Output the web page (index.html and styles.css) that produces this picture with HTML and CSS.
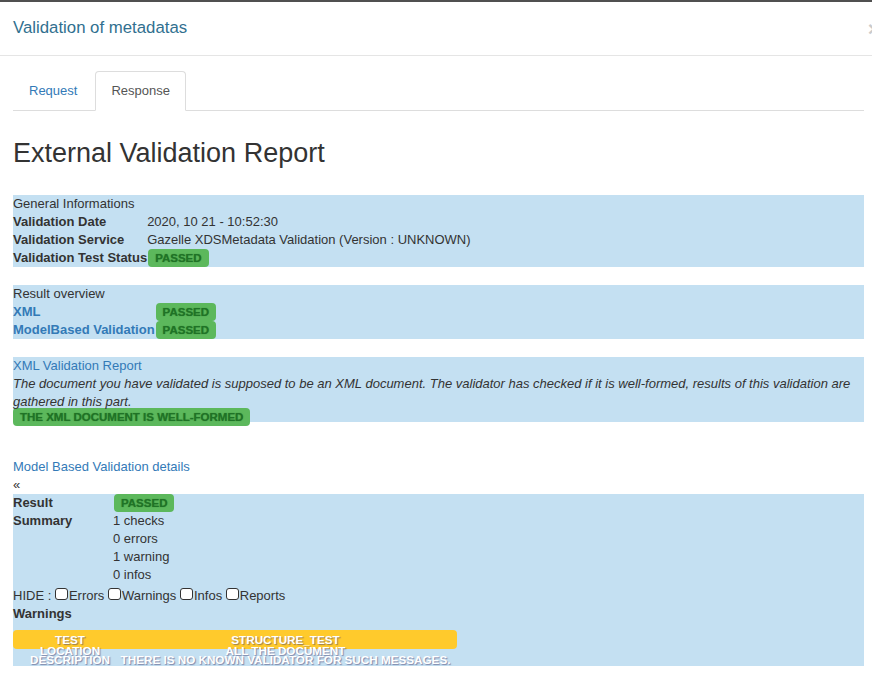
FILE: index.html
```html
<!DOCTYPE html>
<html>
<head>
<meta charset="utf-8">
<title>Validation of metadatas</title>
<link rel="stylesheet" href="styles.css">
</head>
<body>
<div class="modal">
  <div class="modal-header">
    <h4 class="modal-title">Validation of metadatas</h4>
    <span class="close">×</span>
  </div>
  <div class="modal-body">
    <ul class="tabs">
      <li><a href="#">Request</a></li>
      <li class="active"><a href="#">Response</a></li>
    </ul>

    <h1>External Validation Report</h1>

    <div class="panel">
      <div class="grid">
        <div class="full">General Informations</div>
        <div class="lbl">Validation Date</div><div>2020, 10 21 - 10:52:30</div>
        <div class="lbl">Validation Service</div><div>Gazelle XDSMetadata Validation (Version : UNKNOWN)</div>
        <div class="lbl">Validation Test Status</div><div><span class="badge">PASSED</span></div>
      </div>
    </div>

    <div class="panel">
      <div class="grid">
        <div class="full">Result overview</div>
        <div class="lbl link">XML</div><div><span class="badge">PASSED</span></div>
        <div class="lbl link">ModelBased Validation</div><div><span class="badge">PASSED</span></div>
      </div>
    </div>

    <div class="panel">
      <div class="link">XML Validation Report</div>
      <p class="desc">The document you have validated is supposed to be an XML document. The validator has checked if it is well-formed, results of this validation are gathered in this part.</p>
      <div class="badge wide">THE XML DOCUMENT IS WELL-FORMED</div>
    </div>

    <div class="section-title link">Model Based Validation details</div>
    <div class="laquo">«</div>

    <div class="panel">
      <div class="grid g100">
        <div class="lbl">Result</div><div><span class="badge">PASSED</span></div>
        <div class="lbl">Summary</div><div>1 checks</div>
        <div></div><div>0 errors</div>
        <div></div><div>1 warning</div>
        <div></div><div>0 infos</div>
      </div>
      <div class="hide">HIDE : <input type="checkbox">Errors <input type="checkbox">Warnings <input type="checkbox">Infos <input type="checkbox">Reports</div>
      <div class="lbl">Warnings</div>
      <div class="wtable">
        <div class="wrow head"><div class="cell">Test</div><div class="cell">structure_test</div></div>
        <div class="wrow r2"><div class="cell">Location</div><div class="cell">All the document</div></div>
        <div class="wrow r3"><div class="cell">Description</div><div class="cell">There is no known validator for such messages.</div></div>
      </div>
    </div>
  </div>
</div>
</body>
</html>
```
FILE: styles.css
```css
* { box-sizing: border-box; }
html, body { margin: 0; overflow: hidden; }
body {
  width: 872px;
  height: 674px;
  font-family: "Liberation Sans", Arial, Helvetica, sans-serif;
  font-size: 13px;
  line-height: 18px;
  color: #333;
  background: #fff;
}
.modal { border-top: 2px solid #505050; }
.modal-header {
  display: flex;
  justify-content: space-between;
  align-items: flex-start;
  padding: 14px 0 15px 13px;
  border-bottom: 1px solid #e5e5e5;
}
.modal-title {
  margin: 0;
  font-size: 16.8px;
  line-height: 24px;
  font-weight: normal;
  color: #31708f;
}
.close {
  font-size: 21px;
  font-weight: bold;
  line-height: 21px;
  color: #000;
  opacity: .2;
  margin: 2px -8px 0 0;
}
.modal-body { padding: 15px 8px 0 13px; }
.tabs {
  display: flex;
  list-style: none;
  margin: 0;
  padding: 0;
  border-bottom: 1px solid #ddd;
}
.tabs li { margin: 0 2px -1px 0; }
.tabs a {
  display: block;
  padding: 10px 15px 10px;
  line-height: 18px;
  border: 1px solid transparent;
  border-radius: 4px 4px 0 0;
  color: #337ab7;
  text-decoration: none;
}
.tabs .active a {
  color: #555;
  background: #fff;
  border-color: #ddd #ddd transparent;
}
h1 {
  font-size: 27px;
  line-height: 30px;
  font-weight: normal;
  margin: 27px 0 27px;
  color: #333;
}
.panel {
  display: flow-root;
  background: #c4e0f2;
  margin-bottom: 18px;
}
.grid {
  display: grid;
  grid-template-columns: max-content 1fr;
}
.grid.g100 { grid-template-columns: 100px 1fr; }
.full { grid-column: 1 / -1; }
.lbl { font-weight: bold; }
.link { color: #337ab7; }
.badge {
  display: inline-block;
  vertical-align: top;
  background: #5cb85c;
  color: #1f7326;
  text-shadow: 0 0 1px rgba(20, 90, 20, .6);
  font-weight: bold;
  font-size: 11.5px;
  line-height: 18px;
  padding: 0 7px;
  border-radius: 4px;
}
.grid .badge { margin-left: 1px; }
.badge.wide {
  display: block;
  width: fit-content;
  margin: -3px 0 -4px;
}
.desc { margin: 0; font-style: italic; }
.section-title { padding-top: 18px; }
.laquo { line-height: 18px; }
.hide { padding-top: 3px; }
.hide input {
  -webkit-appearance: none;
  appearance: none;
  display: inline-block;
  width: 13px;
  height: 12px;
  margin: 0 1px 0 0;
  vertical-align: baseline;
  border: 1px solid #333;
  border-radius: 3px;
  background: #fff;
}
.wtable {
  margin-top: 7px;
  padding-bottom: 2px;
  font-size: 11.7px;
  font-weight: bold;
  text-transform: uppercase;
  color: #fff;
  text-shadow: 1px 1px 1px rgba(70, 60, 110, .55);
}
.wrow {
  display: grid;
  grid-template-columns: 114px 317px;
  width: 444px;
}
.cell {
  display: flex;
  justify-content: center;
  white-space: nowrap;
}
.head {
  background: #ffca2c;
  border-radius: 4px;
  line-height: 19px;
}
.r2 { line-height: 9px; margin-top: -3px; }
.r3 { line-height: 9px; }
```
